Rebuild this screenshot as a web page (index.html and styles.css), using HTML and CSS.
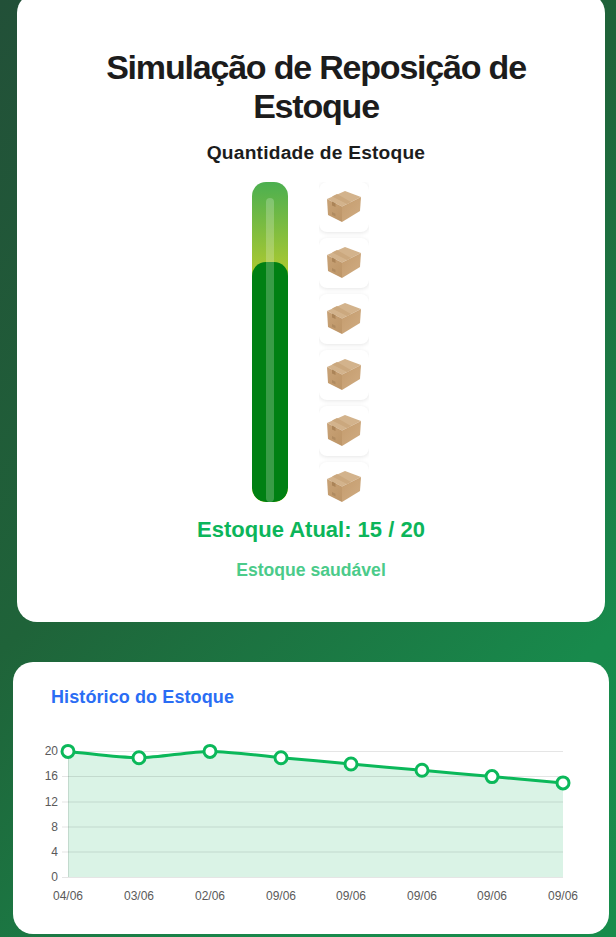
FILE: index.html
```html
<!DOCTYPE html>
<html lang="pt-BR">
<head>
  <meta charset="UTF-8">
  <meta name="viewport" content="width=device-width, initial-scale=1.0">
  <title>Simulação de Reposição de Estoque</title>
  <link rel="stylesheet" href="styles.css">
</head>
<body>
  <svg class="defs" width="0" height="0" aria-hidden="true">
    <defs>
      <linearGradient id="box-left" x1="0" y1="0" x2="1" y2="1">
        <stop offset="0" stop-color="#c8a276"/>
        <stop offset="1" stop-color="#bd9567"/>
      </linearGradient>
      <linearGradient id="box-right" x1="0" y1="0" x2="1" y2="1">
        <stop offset="0" stop-color="#c49c6e"/>
        <stop offset="1" stop-color="#d0ac82"/>
      </linearGradient>
      <symbol id="box" viewBox="0 0 50 50">
        <path d="M26 9 L42 15 L23 24.500 L8 17 Z" fill="#d3b38c"/>
        <path d="M8 17 L23 24.500 L23 40 L9 33 Z" fill="url(#box-left)"/>
        <path d="M23 24.500 L42 15 L41 29 L23 40 Z" fill="url(#box-right)"/>
        <path d="M13 14.500 L28 22 L32 20 L18 12 Z" fill="#cba87e"/>
        <path d="M13 19.500 L16.500 21.300 L16.500 25 L13 23.500 Z" fill="#ab8458"/>
        <path d="M13 30 L16.500 31.800 L16.500 34.500 L13 32.800 Z" fill="#b08b60"/>
      </symbol>
    </defs>
  </svg>

  <main class="page">
    <section class="card stock-card">
      <h1>Simulação de Reposição de Estoque</h1>
      <h3>Quantidade de Estoque</h3>

      <div class="stock-view">
        <div class="tube">
          <div class="tube-fill"></div>
          <div class="tube-shine"></div>
        </div>
        <div class="box-list">
          <div class="box-tile"><svg width="50" height="50"><use href="#box"/></svg></div>
          <div class="box-tile"><svg width="50" height="50"><use href="#box"/></svg></div>
          <div class="box-tile"><svg width="50" height="50"><use href="#box"/></svg></div>
          <div class="box-tile"><svg width="50" height="50"><use href="#box"/></svg></div>
          <div class="box-tile"><svg width="50" height="50"><use href="#box"/></svg></div>
          <div class="box-tile"><svg width="50" height="50"><use href="#box"/></svg></div>
        </div>
      </div>

      <p class="stock-count">Estoque Atual: 15 / 20</p>
      <p class="stock-status">Estoque saudável</p>
    </section>

    <section class="card history-card">
      <h4>Histórico do Estoque</h4>
      <svg class="chart" width="596" height="226" viewBox="13 708 596 226">
        <path class="area" d="M68 751.400 C89.300 753.300 117.700 757.700 139 757.700 C160.300 757.700 188.700 751.400 210 751.400 C231.300 751.400 259.700 755.800 281 757.700 C302 759.600 330 762 351 764 C372.200 765.900 400.800 768.400 422 770.300 C443 772.200 471 774.700 492 776.600 C513.300 778.500 541.700 781 563 782.900 L563 877 L68 877 Z"/>
        <g class="grid">
          <path d="M62 751.500 H563"/>
          <path d="M62 776.500 H563"/>
          <path d="M62 802 H563"/>
          <path d="M62 827 H563"/>
          <path d="M62 852 H563"/>
          <path d="M62 877.500 H563"/>
          <path d="M68.500 745 V877"/>
        </g>
        <g class="y-labels">
          <text x="58" y="755">20</text>
          <text x="58" y="780">16</text>
          <text x="58" y="806">12</text>
          <text x="58" y="831">8</text>
          <text x="58" y="856">4</text>
          <text x="58" y="881">0</text>
        </g>
        <g class="x-labels">
          <text x="68" y="900">04/06</text>
          <text x="139" y="900">03/06</text>
          <text x="210" y="900">02/06</text>
          <text x="281" y="900">09/06</text>
          <text x="351" y="900">09/06</text>
          <text x="422" y="900">09/06</text>
          <text x="492" y="900">09/06</text>
          <text x="563" y="900">09/06</text>
        </g>
        <path class="line" d="M68 751.400 C89.300 753.300 117.700 757.700 139 757.700 C160.300 757.700 188.700 751.400 210 751.400 C231.300 751.400 259.700 755.800 281 757.700 C302 759.600 330 762 351 764 C372.200 765.900 400.800 768.400 422 770.300 C443 772.200 471 774.700 492 776.600 C513.300 778.500 541.700 781 563 782.900"/>
        <g class="points">
          <circle cx="68" cy="751.400" r="6"/>
          <circle cx="139" cy="757.700" r="6"/>
          <circle cx="210" cy="751.400" r="6"/>
          <circle cx="281" cy="757.700" r="6"/>
          <circle cx="351" cy="764" r="6"/>
          <circle cx="422" cy="770.300" r="6"/>
          <circle cx="492" cy="776.600" r="6"/>
          <circle cx="563" cy="782.900" r="6"/>
        </g>
      </svg>
    </section>
  </main>
</body>
</html>
```

FILE: styles.css
```css
html, body {
  margin: 0;
  height: 937px;
  overflow: hidden;
}
body {
  font-family: "Liberation Sans", Arial, sans-serif;
  background: linear-gradient(135deg, #225038 0%, #1f6339 42%, #188a4c 80%, #178c4b 100%);
}
.defs {
  display: block;
}
.page {
  display: flex;
  flex-direction: column;
  align-items: center;
  gap: 40px;
  width: 622px;
  margin-top: -7px;
}
.card {
  background: #fff;
  border-radius: 20px;
}
.stock-card {
  box-sizing: border-box;
  width: 588px;
  height: 629px;
  padding: 55px 40px 0;
  text-align: center;
}
h1 {
  margin: 0;
  padding-left: 10px;
  font-size: 34px;
  line-height: 39px;
  letter-spacing: -1.2px;
  font-weight: bold;
  color: #1c1c1c;
}
h3 {
  margin: 15px 0 0;
  padding-left: 10px;
  font-size: 19.2px;
  line-height: 24px;
  letter-spacing: 0.2px;
  color: #1c1c1c;
}
.stock-view {
  display: flex;
  justify-content: center;
  gap: 31px;
  height: 320px;
  margin-top: 17px;
  padding-right: 1px;
}
.tube {
  position: relative;
  width: 36px;
  height: 320px;
  border-radius: 14px;
  overflow: hidden;
  background: linear-gradient(180deg, #4caf50 0%, #a8c832 27%, #cddc39 100%);
}
.tube-fill {
  position: absolute;
  left: 0;
  right: 0;
  bottom: 0;
  height: 240px;
  border-radius: 14px;
  background: #008013;
}
.tube-shine {
  position: absolute;
  left: 14px;
  top: 16px;
  bottom: 0;
  width: 8px;
  border-radius: 6px;
  background: rgba(255, 255, 255, 0.22);
}
.box-list {
  display: flex;
  flex-direction: column;
  gap: 6px;
  width: 50px;
  height: 320px;
  overflow: hidden;
}
.box-tile {
  flex: none;
  width: 50px;
  height: 50px;
  border-radius: 8px;
  background: #fff;
  box-shadow: 0 1px 4px rgba(0, 0, 0, 0.1);
}
.box-tile svg {
  display: block;
}
.stock-count {
  margin: 15px 0 0;
  font-size: 22px;
  line-height: 26px;
  font-weight: bold;
  color: #0cb55a;
}
.stock-status {
  margin: 16px 0 0;
  font-size: 17.6px;
  line-height: 22px;
  font-weight: bold;
  color: #4bcb8a;
}
.history-card {
  width: 596px;
  height: 272px;
}
h4 {
  margin: 0;
  padding: 24px 0 0 38px;
  font-size: 18px;
  line-height: 22px;
  letter-spacing: 0.1px;
  color: #2a6df4;
}
.chart {
  display: block;
}
.chart text {
  font-size: 12px;
  fill: #5a5a5a;
}
.area {
  fill: #daf3e6;
}
.grid path {
  fill: none;
  stroke: rgba(0, 0, 0, 0.1);
  stroke-width: 1;
}
.y-labels text {
  text-anchor: end;
}
.x-labels text {
  text-anchor: middle;
}
.line {
  fill: none;
  stroke: #0bb85a;
  stroke-width: 3;
}
.points circle {
  fill: #fff;
  stroke: #0bb85a;
  stroke-width: 3;
}
```
